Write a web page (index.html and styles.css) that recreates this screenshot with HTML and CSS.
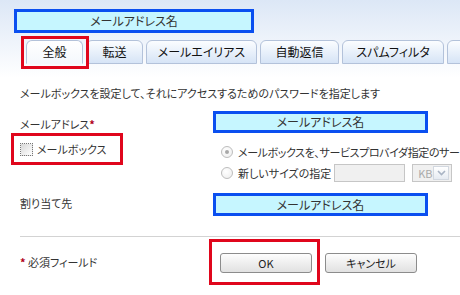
FILE: index.html
```html
<!DOCTYPE html>
<html>
	<head>
		<meta charset="utf-8">
		<title>メールボックス</title>
		<link rel="stylesheet" href="styles.css">
	</head>
	<body>
		<div class="top">
			<div class="name-box name-box-top">メールアドレス名</div>
			<ul class="tabs">
				<li class="tab active mark">全般</li>
				<li class="tab t-fwd">転送</li>
				<li class="tab t-alias">メールエイリアス</li>
				<li class="tab t-auto">自動返信</li>
				<li class="tab t-spam">スパムフィルタ</li>
				<li class="tab t-more"></li>
			</ul>
		</div>
		<div class="content">
			<p class="desc">メールボックスを設定して、それにアクセスするためのパスワードを指定します</p>

			<div class="field field-mail">
				<div class="label">メールアドレス<span class="req">*</span></div>
				<div class="name-box">メールアドレス名</div>
			</div>

			<div class="field field-box">
				<div class="label">
					<span class="mark-box">
						<span class="checkbox"></span>メールボックス
					</span>
				</div>
				<div class="radios">
					<div class="radio-row">
						<span class="radio checked"></span>
						<span class="tight">メールボックスを、サービスプロバイダ指定のサー</span>
					</div>
					<div class="radio-row row2">
						<span class="radio"></span>
						<span>新しいサイズの指定</span>
						<span class="size-input"></span>
						<span class="unit">KB<span class="unit-btn"><svg width="9" height="6" viewBox="0 0 9 6"><path d="M1 1l3.5 3.5L8 1" fill="none" stroke="#a9b4c4" stroke-width="1.6"/></svg></span></span>
					</div>
				</div>
			</div>

			<div class="field field-to">
				<div class="label">割り当て先</div>
				<div class="name-box name-box-tall">メールアドレス名</div>
			</div>

			<div class="sep"></div>

			<div class="footer">
				<div class="label foot-label"><span class="req">*</span> 必須フィールド</div>
				<div class="mark-ok"><button class="btn">OK</button></div>
				<button class="btn btn-cancel">キャンセル</button>
			</div>
		</div>
	</body>
</html>
```

FILE: styles.css
```css
*{margin: 0;padding: 0;}
html,body{overflow: hidden;}
body{
	width: 460px;height: 295px;
	font-family: "Noto Sans CJK JP", sans-serif;
	font-size: 11px;
	font-feature-settings: "palt";
	color: #333;
	background: linear-gradient(#dce7f6, #ffffff 78px) no-repeat;
}
ul,li{list-style: none;}

.top{padding: 9px 0 0 14px;}
.name-box{
	box-sizing: border-box;
	width: 215px;height: 22px;
	border: 3px solid #0a4ff0;
	background: #c6f6ff;
	text-align: center;
	font-size: 12px;
	line-height: 16px;
	color: #333;
}
.name-box-top{width: 240px;height: 24px;line-height: 18px;}
.name-box-tall{height: 23px;line-height: 17px;}

.tabs{display: flex;gap: 3px;margin-top: 7px;padding-left: 12px;white-space: nowrap;}
.tab{
	flex: none;
	box-sizing: border-box;
	height: 24px;
	border: 1px solid #b3c2da;
	border-radius: 6px 6px 0 0;
	background: linear-gradient(#fbfdff, #d6e4f6);
	text-align: center;
	font-size: 12px;
	line-height: 22px;
	color: #111;
	width: 57px;
}
.tab.active{background: linear-gradient(#ffffff, #f4f8fd);border-bottom-color: #f4f8fd;}
.t-alias{width: 111px;}
.t-auto{width: 79px;}
.t-spam{width: 102px;}
.t-more{width: 40px;}
/* 赤枠（注釈） */
.mark{position: relative;}
.mark::after{
	content: "";
	position: absolute;
	left: -6px;right: -7px;top: -5px;bottom: -6px;
	border: 3px solid #e0061c;
}

.content{padding-left: 20px;}
.desc{margin-top: 21px;line-height: 16px;}
.field{display: flex;align-items: flex-start;}
.label{flex: none;width: 193px;}
.req{color: #b0001a;font-weight: bold;}

.field-mail{margin-top: 10px;height: 22px;}
.field-mail .label{line-height: 26px;}

.mark-box{
	display: flex;align-items: center;gap: 4px;
	box-sizing: border-box;
	width: 112px;height: 32px;
	margin-left: -9px;
	padding-left: 6px;
	border: 3px solid #e0061c;
}
.checkbox{
	width: 11px;height: 11px;
	border: 1px dotted #777;
	background: linear-gradient(135deg, #d8d8d8, #ffffff);
}

.radios{padding: 9px 0 0 8px;white-space: nowrap;}
.radio-row{display: flex;align-items: center;gap: 5px;height: 20px;}
.row2{margin-top: 1px;}
.tight{letter-spacing: -0.4px;}
.radio{
	flex: none;
	box-sizing: border-box;
	width: 12px;height: 12px;
	border: 1px solid #bdbdbd;
	border-radius: 50%;
	background: radial-gradient(circle at 40% 35%, #ffffff, #ececec);
	display: flex;align-items: center;justify-content: center;
}
.radio.checked::after{content: "";width: 4px;height: 4px;border-radius: 50%;background: #a8a8a8;}
.size-input{
	flex: none;
	box-sizing: border-box;
	width: 71px;height: 18px;
	margin-left: -2px;
	border: 1px solid #c6c6c6;
	background: #f0f0f0;
}
.unit{
	display: flex;align-items: center;justify-content: space-between;
	box-sizing: border-box;
	width: 40px;height: 18px;
	margin-left: 2px;
	padding: 0 2px 0 5px;
	border: 1px solid #c6c6c6;
	background: #f0f0f0;
	color: #aaa;
	font-size: 11px;
}
.unit-btn{
	display: flex;align-items: center;justify-content: center;
	width: 14px;height: 12px;
	border: 1px solid #d2d8e0;
	background: linear-gradient(#ffffff, #e6ebf2);
}

.field-to{margin-top: 10px;}
.field-to .label{line-height: 21px;}

.sep{margin-top: 20px;border-top: 1px solid #d3d3d3;}

.footer{display: flex;align-items: flex-start;margin-top: 2px;}
.foot-label{width: 189px;line-height: 20px;margin-top: 13px;}
.mark-ok{
	border: 3px solid #e0061c;
	padding: 11px 5px 9px 8px;
}
.btn{
	display: block;
	box-sizing: border-box;
	width: 92px;height: 20px;
	border: 1px solid #8c8c8c;
	border-radius: 3px;
	background: linear-gradient(#fdfdfd, #e1e1e1);
	font-family: "Noto Sans CJK JP", sans-serif;
	font-size: 11px;
	font-feature-settings: "palt";
	line-height: 18px;
	color: #222;
}
.btn-cancel{margin: 14px 0 0 5px;}
```
